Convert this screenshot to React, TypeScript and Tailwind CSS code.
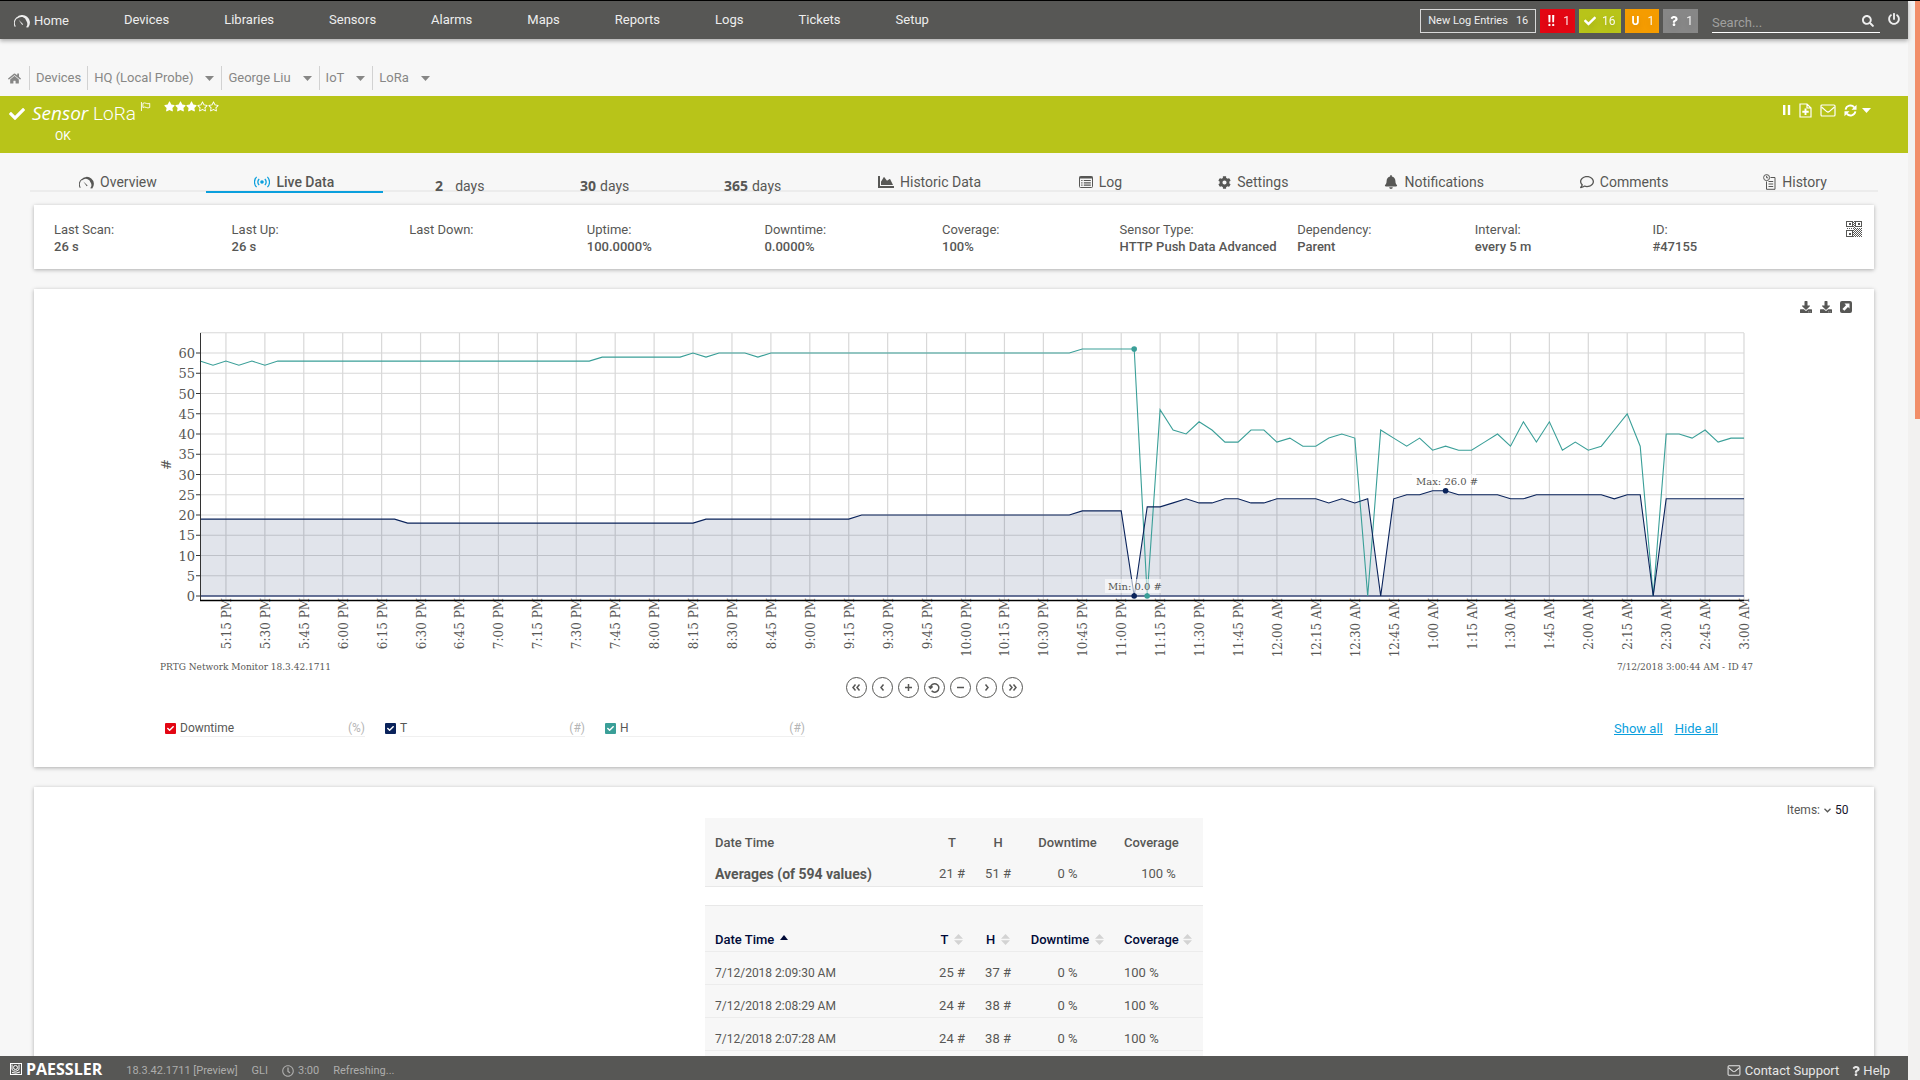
import type { ReactNode } from "react";
import {
    FaBell,
    FaChartArea,
    FaCheck,
    FaCog,
    FaDownload,
    FaHome,
    FaPowerOff,
    FaQuestion,
    FaRegClock,
    FaRegComment,
    FaRegStar,
    FaSearch,
    FaStar,
} from "react-icons/fa";

interface IconProps {
    className?: string;
}

interface LegendProps {
    id: string;
    label: string;
    unit: string;
    color: string;
}

const navItems = ["Devices", "Libraries", "Sensors", "Alarms", "Maps", "Reports", "Logs", "Tickets", "Setup"];
const crumbs = ["HQ (Local Probe)", "George Liu", "IoT", "LoRa"];

const infoItems = [
    ["Last Scan:", "26 s"],
    ["Last Up:", "26 s"],
    ["Last Down:", ""],
    ["Uptime:", "100.0000%"],
    ["Downtime:", "0.0000%"],
    ["Coverage:", "100%"],
    ["Sensor Type:", "HTTP Push Data Advanced"],
    ["Dependency:", "Parent"],
    ["Interval:", "every 5 m"],
    ["ID:", "#47155"],
];

const rows = [
    ["7/12/2018 2:09:30 AM", "25 #", "37 #", "0 %", "100 %"],
    ["7/12/2018 2:08:29 AM", "24 #", "38 #", "0 %", "100 %"],
    ["7/12/2018 2:07:28 AM", "24 #", "38 #", "0 %", "100 %"],
];

const rep = (value: number, count: number): number[] => Array(count).fill(value);

// one value every 5 minutes, 5:05 PM to 3:00 AM
const seriesT = [
    ...rep(19, 16), ...rep(18, 23), ...rep(19, 12), ...rep(20, 17), ...rep(21, 4),
    0, 22, 22, 23, 24, 23, 23, 24, 24, 23, 23, 24, 24, 24, 24, 23, 24, 23, 24,
    0, 24, 25, 25, 26, 26, 25, 25, 25, 25, 24, 24, 25, 25, 25, 25, 25, 25, 24, 25, 25,
    0, ...rep(24, 7),
];
const seriesH = [
    58, 57, 58, 57, 58, 57, ...rep(58, 25), ...rep(59, 7), 60, 59, 60, 60, 60, 59, ...rep(60, 24), ...rep(61, 5),
    0, 46, 41, 40, 43, 41, 38, 38, 41, 41, 38, 39, 37, 37, 39, 40, 39,
    0, 41, 39, 37, 39, 36, 37, 36, 36, 38, 40, 37, 43, 38, 43, 36, 38, 36, 37, 41, 45, 37,
    0, 40, 40, 39, 41, 38, 39, 39,
];

const px = (i: number) => 40 + (i * 1544) / 119;
const py = (v: number) => 271 - v * 4.05;
const toPoints = (data: number[]) => data.map((v, i) => `${px(i).toFixed(1)},${py(v).toFixed(1)}`).join(" ");

function timeLabel(step: number) {
    const minutes = 17 * 60 + 15 + step * 15;
    const hour = Math.floor(minutes / 60) % 24;
    const min = String(minutes % 60).padStart(2, "0");
    return `${hour % 12 || 12}:${min} ${hour >= 12 ? "PM" : "AM"}`;
}

function GaugeIcon({ className }: IconProps) {
    return (
        <svg viewBox="0 0 16 14" className={className} aria-hidden="true">
            <path d="M1.3 12.6A6.8 6.8 0 0 1 3 3.6" fill="none" stroke="currentColor" strokeWidth="1.1" />
            <path
                d="M2.4 3.7A7.4 7.4 0 0 1 14.2 13.4L12 13.2A5.2 5.2 0 0 0 12.4 7 5.3 5.3 0 0 0 3.4 4.6z"
                fill="currentColor"
            />
            <path d="M4.6 5.8l4.6 4.4-1 .9z" fill="currentColor" />
        </svg>
    );
}

function BroadcastIcon({ className }: IconProps) {
    return (
        <svg viewBox="0 0 16 12" className={className} fill="none" stroke="currentColor" aria-hidden="true">
            <circle cx="8" cy="6" r="1.8" fill="currentColor" stroke="none" />
            <path d="M5.2 3a4 4 0 0 0 0 6M10.8 3a4 4 0 0 1 0 6" strokeWidth="1.3" />
            <path d="M2.6.8a7.4 7.4 0 0 0 0 10.4M13.4.8a7.4 7.4 0 0 1 0 10.4" strokeWidth="1.2" />
        </svg>
    );
}

function CaretIcon() {
    return (
        <svg viewBox="0 0 9 5" className="h-[5px] w-[9px]" fill="currentColor" aria-hidden="true">
            <path d="M0 0h9L4.5 5z" />
        </svg>
    );
}

function PauseIcon() {
    return (
        <svg viewBox="0 0 9 10" className="h-[10px] w-[9px]" fill="currentColor" aria-hidden="true">
            <path d="M1 0h2.4v10H1zM5.8 0h2.4v10H5.8z" />
        </svg>
    );
}

function ListIcon({ className }: IconProps) {
    return (
        <svg viewBox="0 0 14 12" className={className} fill="none" stroke="currentColor" aria-hidden="true">
            <rect x=".5" y=".5" width="13" height="11" rx="1" />
            <path d="M.5 1.5h13" strokeWidth="2" />
            <path d="M2.2 4.5h1.3M2.2 6.8h1.3M2.2 9.1h1.3M4.8 4.5h7M4.8 6.8h7M4.8 9.1h7" strokeWidth="1.2" />
        </svg>
    );
}

function MailIcon({ className }: IconProps) {
    return (
        <svg viewBox="0 0 16 13" className={className} fill="none" stroke="currentColor" strokeWidth="1.2" aria-hidden="true">
            <rect x="1" y="1" width="14" height="11" rx="1" />
            <path d="M1.5 3l5.3 4.6q1.2.9 2.4 0L14.5 3" />
        </svg>
    );
}

function FilePlusIcon({ className }: IconProps) {
    return (
        <svg viewBox="0 0 13 15" className={className} fill="none" stroke="currentColor" aria-hidden="true">
            <path d="M1 1h7l4 4v9H1zM8 1v4h4" strokeWidth="1.2" />
            <path d="M6.5 5.5v6.4M3.3 8.7h6.4" strokeWidth="1.9" />
        </svg>
    );
}

function RefreshIcon({ className }: IconProps) {
    return (
        <svg viewBox="0 0 14 14" className={className} fill="none" stroke="currentColor" strokeWidth="2" aria-hidden="true">
            <path d="M1.7 6A5.3 5.3 0 0 1 11 3.6M12.3 8A5.3 5.3 0 0 1 3 10.4" />
            <path d="M13.5.8v5.4H8.1zM.5 13.2V7.8h5.4z" fill="currentColor" stroke="none" />
        </svg>
    );
}

function FlagIcon({ className }: IconProps) {
    return (
        <svg viewBox="0 0 11 10" className={className} fill="none" stroke="currentColor" aria-hidden="true">
            <path d="M1 0v10M2.6 1.5q2-1 3.8 0t3.8 0v4.6q-2 1-3.8 0t-3.8 0z" />
        </svg>
    );
}

function HistoryIcon({ className }: IconProps) {
    return (
        <svg viewBox="0 0 13 16" className={className} fill="none" stroke="currentColor" aria-hidden="true">
            <circle cx="3.6" cy="3.6" r="3" />
            <path d="M3.6 1.8v2H5.2M7.5 3.5H12V15.3H3.5V7.5" />
            <path d="M5.5 7.5h4.7M5.5 10h4.7M5.5 12.5h4.7" />
        </svg>
    );
}

function QrIcon({ className }: IconProps) {
    const dots: ReactNode[] = [];
    for (let y = 0; y < 16; y++) {
        for (let x = 0; x < 16; x++) {
            const mixed = (x >= 8 && y >= 8) || x === 7 || x === 8 || y === 7;
            if (mixed && (x + y) % 2 === 0) dots.push(<rect key={`${x}-${y}`} x={x} y={y} width="1" height="1" />);
        }
    }
    return (
        <svg viewBox="0 0 16 16" className={className} fill="currentColor" aria-hidden="true">
            <path fillRule="evenodd" d="M0 0h7v6H0zM1 1v4h5V1zM9 0h7v6H9zM10 1v4h5V1zM0 9h7v7H0zM1 10v5h5v-5z" />
            <path d="M3 2h2v2H3zM12 2h2v2h-2zM3 12h2v2H3z" />
            {dots}
        </svg>
    );
}

function OpenIcon({ className }: IconProps) {
    return (
        <svg viewBox="0 0 12 12" className={className} aria-hidden="true">
            <rect width="12" height="12" rx="2" fill="currentColor" />
            <path d="M4.5 2.5h5v5L8 6 4.4 9.8 2.4 8 6 4.2z" fill="white" />
        </svg>
    );
}

function SortIcon() {
    return (
        <svg viewBox="0 0 9 11" className="h-[11px] w-[9px] text-[#d3d3d3]" fill="currentColor" aria-hidden="true">
            <path d="M0 4.7L4.5 0 9 4.7zM0 6.3h9L4.5 11z" />
        </svg>
    );
}

function Badge({ color, icon, count }: { color: string; icon: ReactNode; count: number }) {
    return (
        <a href="#" className={`flex h-6 items-center gap-[6px] px-[5px] text-xs text-white/90 ${color}`}>
            <span className="flex w-3 justify-center font-bold text-white drop-shadow-md">{icon}</span>
            <span className="drop-shadow-md">{count}</span>
        </a>
    );
}

function Header() {
    return (
        <header className="z-10 flex h-[39px] shrink-0 items-center border-t border-black bg-[#575755] pr-2 pl-[14px] text-[13px] text-[#eeeeee] shadow-[0_2px_4px_rgba(0,0,0,0.3)]">
            <nav className="flex items-center gap-[55px]">
                <a href="#" className="flex items-center gap-1 pt-[2px]">
                    <GaugeIcon className="h-[14px] w-4" />
                    Home
                </a>
                {navItems.map((item) => (
                    <a key={item} href="#">{item}</a>
                ))}
            </nav>
            <div className="ml-auto flex items-center gap-1 pt-[2px]">
                <a href="#" className="flex h-6 items-center gap-2 border border-[#d8d8d8] px-[7px] text-[11px]">
                    <span>New Log Entries</span>
                    <span>16</span>
                </a>
                <Badge color="bg-[#e30613]" icon={<span className="text-sm">!!</span>} count={1} />
                <Badge color="bg-[#b8c419]" icon={<FaCheck size={12} />} count={16} />
                <Badge color="bg-[#f59c00]" icon="U" count={1} />
                <Badge color="bg-[#878787]" icon={<FaQuestion size={10} />} count={1} />
                <div className="ml-[10px] flex h-6 w-[168px] items-center border-b border-white">
                    <input
                        aria-label="Search"
                        placeholder="Search..."
                        className="w-full pt-1 text-[13px] outline-none placeholder:text-[#a0a09f]"
                    />
                    <button aria-label="Run search" className="pr-[6px]"><FaSearch size={12} /></button>
                </div>
                <button aria-label="Log out" className="ml-1 pb-1"><FaPowerOff size={12} /></button>
            </div>
        </header>
    );
}

function Breadcrumb() {
    return (
        <nav aria-label="Breadcrumb" className="flex h-[57px] items-end pb-[6px] text-[13px] text-[#878786]">
            <a href="#" aria-label="Home" className="flex h-6 items-center pr-2 pl-2"><FaHome size={13} /></a>
            <a href="#" className="flex h-6 items-center border-l border-[#d2d2d2] px-[6px]">Devices</a>
            {crumbs.map((crumb) => (
                <a key={crumb} href="#" className="flex h-6 items-center gap-3 border-l border-[#d2d2d2] pr-[7px] pl-[6px]">
                    {crumb}
                    <CaretIcon />
                </a>
            ))}
        </nav>
    );
}

function StatusBand() {
    return (
        <section className="flex h-[57px] justify-between bg-[#b8c419] text-white">
            <div className="pl-[9px]">
                <div className="flex h-8 items-center">
                    <FaCheck size={16} className="mt-1" />
                    <h1 className="mt-1 ml-[7px] text-[19px] font-light">
                        <i className="font-['Open_Sans',sans-serif] font-normal">Sensor</i> LoRa
                    </h1>
                    <FlagIcon className="mb-3 ml-1 h-[9px] w-[11px]" />
                    <div className="mb-3 ml-[13px] flex" aria-label="Priority 3 of 5">
                        <FaStar size={11} /><FaStar size={11} /><FaStar size={11} />
                        <FaRegStar size={11} /><FaRegStar size={11} />
                    </div>
                </div>
                <p className="pl-[46px] text-xs">OK</p>
            </div>
            <div className="flex h-7 items-center gap-2 pr-[37px]">
                <button aria-label="Pause"><PauseIcon /></button>
                <button aria-label="Add report"><FilePlusIcon className="h-[15px] w-[13px]" /></button>
                <button aria-label="Send mail"><MailIcon className="h-[13px] w-4" /></button>
                <button aria-label="Refresh" className="flex items-center gap-[5px]">
                    <RefreshIcon className="h-[13px] w-[13px]" />
                    <CaretIcon />
                </button>
            </div>
        </section>
    );
}

function Tab({ icon, active, children }: { icon?: ReactNode; active?: boolean; children: ReactNode }) {
    return (
        <a
            href="#"
            className={`-mb-[3px] flex h-[23px] items-center justify-center gap-[6px] border-b-2 pt-[3px] whitespace-nowrap ${active ? "border-[#0a9fdd] font-medium" : "border-transparent"}`}
        >
            {icon}
            <span>{children}</span>
        </a>
    );
}

function Tabs() {
    return (
        <nav className="mx-[30px] grid h-[39px] grid-cols-[176fr_177fr_154fr_136fr_160fr_194fr_148fr_158fr_204fr_176fr_166fr] items-end border-b-2 border-[#ececec] text-sm text-[#575755]">
            <Tab icon={<GaugeIcon className="h-[13px] w-[15px]" />}>Overview</Tab>
            <Tab active icon={<BroadcastIcon className="h-3 w-4 text-[#0a9fdd]" />}>Live Data</Tab>
            {[["2", "mr-2"], ["30", ""], ["365", ""]].map(([count, gap]) => (
                <a key={count} href="#" className="-mb-[3px] flex h-[23px] items-center justify-center gap-1 pt-2">
                    <b className={`font-['Open_Sans',sans-serif] ${gap}`}>{count}</b>
                    <span>days</span>
                </a>
            ))}
            <Tab icon={<FaChartArea size={16} />}>Historic Data</Tab>
            <Tab icon={<ListIcon className="h-3 w-[14px]" />}>Log</Tab>
            <Tab icon={<FaCog size={13} />}>Settings</Tab>
            <Tab icon={<FaBell size={14} />}>Notifications</Tab>
            <Tab icon={<FaRegComment size={14} />}>Comments</Tab>
            <Tab icon={<HistoryIcon className="h-4 w-[13px]" />}>History</Tab>
        </nav>
    );
}

function Card({ className, children }: { className: string; children: ReactNode }) {
    return (
        <section className={`relative mx-[34px] bg-white shadow-[0_1px_4px_rgba(0,0,0,0.3)] ${className}`}>
            {children}
        </section>
    );
}

function InfoCard() {
    return (
        <Card className="mt-[13px] flex h-16 items-start pt-4 pr-3 pl-5 text-[#575755]">
            <dl className="grid flex-1 grid-cols-10 text-[13px] leading-[17px]">
                {infoItems.map(([label, value]) => (
                    <div key={label} className="whitespace-nowrap">
                        <dt>{label}</dt>
                        <dd className="font-medium">{value}</dd>
                    </div>
                ))}
            </dl>
            <button aria-label="QR code" className="pl-4"><QrIcon className="h-4 w-4" /></button>
        </Card>
    );
}

function Chart() {
    const grid = Array.from({ length: 14 }, (_, i) => i * 5);
    const steps = Array.from({ length: 40 }, (_, i) => i);
    const linesT = toPoints(seriesT);
    return (
        <svg viewBox="0 0 1594 350" className="block w-full overflow-visible font-['DejaVu_Serif',serif]" fill="#575755">
            <g stroke="#d8d8d8" strokeWidth="1.2">
                {grid.map((v) => <line key={v} x1="40" x2="1584" y1={py(v)} y2={py(v)} />)}
                {steps.map((s) => <line key={s} x1={px(2 + s * 3)} x2={px(2 + s * 3)} y1="8" y2="276" />)}
            </g>
            <g fontSize="13" textAnchor="end">
                {grid.slice(0, 13).map((v) => (
                    <g key={v}>
                        <line x1="36" x2="40" y1={py(v)} y2={py(v)} stroke="#333333" />
                        <text x="35" y={py(v) + 5}>{v}</text>
                    </g>
                ))}
            </g>
            <g fontSize="12" textAnchor="end">
                {steps.map((s) => (
                    <text key={s} transform={`translate(${px(2 + s * 3) + 5} 273) rotate(-90)`}>{timeLabel(s)}</text>
                ))}
            </g>
            <text fontSize="13" transform="translate(11 145) rotate(-90)">#</text>
            <polygon points={`40,271 ${linesT} 1584,271`} fill="#0a235b" fillOpacity="0.12" />
            <line x1="40" x2="1584" y1="271" y2="271" stroke="#3c4c7c" strokeWidth="1.5" />
            <polyline points={toPoints(seriesH)} fill="none" stroke="#3a9f98" strokeWidth="1.1" />
            <polyline points={linesT} fill="none" stroke="#0a235b" strokeWidth="1.1" />
            <line x1="40.5" x2="40.5" y1="8" y2="276" stroke="#333333" />
            <line x1="40" x2="1584" y1="275.5" y2="275.5" stroke="#000000" strokeWidth="1.3" />
            <rect x="945" y="254" width="56" height="14" fill="white" fillOpacity="0.6" />
            <rect x="1252" y="149" width="64" height="13" fill="white" fillOpacity="0.6" />
            <g fontSize="10">
                <text x="948" y="265">Min: 0.0 #</text>
                <text x="1256" y="160">Max: 26.0 #</text>
            </g>
            <circle cx={px(72)} cy={py(0)} r="2.8" fill="#0a235b" />
            <circle cx={px(96)} cy={py(26)} r="2.8" fill="#0a235b" />
            <circle cx={px(72)} cy={py(61)} r="2.8" fill="#3a9f98" />
            <circle cx={px(73)} cy={py(0)} r="2.8" fill="#3a9f98" />
            <g fontSize="9">
                <text x="0" y="345">PRTG Network Monitor 18.3.42.1711</text>
                <text x="1593" y="345" textAnchor="end">7/12/2018 3:00:44 AM - ID 47</text>
            </g>
        </svg>
    );
}

const controls = [
    ["First", "M9.5 7.5L7 10.5l2.5 3M13.5 7.5l-2.5 3 2.5 3"],
    ["Back", "M11.5 7.5L9 10.5l2.5 3"],
    ["Zoom in", "M10.5 7v7M7 10.5h7"],
    ["Reset zoom", "M7.6 13.8A4.2 4.2 0 1 0 6.5 10.6M4.8 9.2l1.7 2.2L8.6 9.4"],
    ["Zoom out", "M7 10.5h7"],
    ["Forward", "M9.5 7.5l2.5 3-2.5 3"],
    ["Last", "M7.5 7.5l2.5 3-2.5 3M11.5 7.5l2.5 3-2.5 3"],
];

function LegendItem({ id, label, unit, color }: LegendProps) {
    return (
        <div className="flex w-[200px] items-center gap-1 text-xs text-[#575755]">
            <span className="relative flex h-[11px] w-[11px] text-white">
                <input
                    type="checkbox"
                    id={id}
                    defaultChecked
                    className={`h-[11px] w-[11px] appearance-none rounded-[1px] ${color}`}
                />
                <FaCheck size={7} className="pointer-events-none absolute top-[2px] left-[2px]" />
            </span>
            <label htmlFor={id} className="flex flex-1 justify-between border-b border-[#f0f0f0]">
                <span>{label}</span>
                <span className="text-[#b5b5b5]">{unit}</span>
            </label>
        </div>
    );
}

function ChartCard() {
    return (
        <Card className="mt-5 h-[478px] pt-3 text-[#575755]">
            <div className="flex h-3 justify-end gap-2 pr-[22px]">
                <button aria-label="Download image"><FaDownload size={12} /></button>
                <button aria-label="Download data"><FaDownload size={12} /></button>
                <button aria-label="Open in window"><OpenIcon className="h-3 w-3" /></button>
            </div>
            <div className="pt-3 pr-[120px] pl-[126px]">
                <Chart />
            </div>
            <div className="mt-[2px] flex justify-center gap-[5px] pr-10">
                {controls.map(([label, d]) => (
                    <button key={label} aria-label={label} className="rounded-full">
                        <svg viewBox="0 0 21 21" className="h-[21px] w-[21px]" fill="none" stroke="currentColor">
                            <circle cx="10.5" cy="10.5" r="10" />
                            <path d={d} strokeWidth="1.5" />
                        </svg>
                    </button>
                ))}
            </div>
            <div className="mt-[21px] flex items-center justify-between pr-[156px] pl-[131px]">
                <div className="flex gap-5">
                    <LegendItem id="ch-downtime" label="Downtime" unit="(%)" color="bg-[#e30613]" />
                    <LegendItem id="ch-t" label="T" unit="(#)" color="bg-[#0a235b]" />
                    <LegendItem id="ch-h" label="H" unit="(#)" color="bg-[#3a9f98]" />
                </div>
                <div className="flex gap-3 text-[13px] text-[#0a9fdd] underline">
                    <a href="#">Show all</a>
                    <a href="#">Hide all</a>
                </div>
            </div>
        </Card>
    );
}

function Columns() {
    return (
        <colgroup>
            <col className="w-[224px]" />
            <col className="w-[46px]" />
            <col className="w-[46px]" />
            <col className="w-[93px]" />
            <col className="w-[89px]" />
        </colgroup>
    );
}

function DataCard() {
    return (
        <Card className="mt-5 text-[13px] text-[#575755]">
            <div className="flex h-[31px] items-end justify-end gap-1 pr-[25px] text-xs leading-4">
                <label htmlFor="items">Items:</label>
                <span className="flex items-center">
                    <svg viewBox="0 0 7 5" className="h-[5px] w-[7px]" fill="none" stroke="currentColor" aria-hidden="true">
                        <path d="M.5.8l3 3 3-3" strokeWidth="1.3" />
                    </svg>
                    <select id="items" className="appearance-none pl-1 text-xs leading-4 text-[#14142b]">
                        <option>50</option>
                    </select>
                </span>
            </div>
            <table className="mx-auto w-[498px] table-fixed bg-[#f7f7f7]">
                <Columns />
                <thead>
                    <tr className="h-10 text-center align-bottom [&>th]:pb-[6px] [&>th]:font-medium">
                        <th className="pl-[10px] text-left">Date Time</th>
                        <th>T</th>
                        <th>H</th>
                        <th>Downtime</th>
                        <th className="pl-[10px] text-left">Coverage</th>
                    </tr>
                </thead>
                <tbody>
                    <tr className="h-7 border-b border-[#e8e8e8] text-center">
                        <th className="pt-1 pl-[10px] text-left text-sm leading-4 font-bold">Averages (of 594 values)</th>
                        <td className="pt-1">21 #</td>
                        <td className="pt-1">51 #</td>
                        <td className="pt-1">0 %</td>
                        <td className="pt-1">100 %</td>
                    </tr>
                </tbody>
            </table>
            <div className="mx-auto mt-[18px] w-[498px] border-t border-[#e8e8e8] bg-[#f7f7f7] pb-8">
                <table className="w-full table-fixed">
                    <Columns />
                    <thead>
                        <tr className="h-[46px] border-b border-[#ececec] align-bottom text-[#000a37] [&>th]:pb-[2px] [&>th]:font-medium">
                            <th className="pl-[10px]">
                                <button className="flex items-center gap-[6px]">
                                    Date Time
                                    <svg viewBox="0 0 8 5" className="mb-1 h-[5px] w-2" fill="currentColor"><path d="M0 5l4-5 4 5z" /></svg>
                                </button>
                            </th>
                            <th><button className="mx-auto flex items-center gap-[6px]">T <SortIcon /></button></th>
                            <th><button className="mx-auto flex items-center gap-[6px]">H <SortIcon /></button></th>
                            <th><button className="mx-auto flex items-center gap-[6px]">Downtime <SortIcon /></button></th>
                            <th className="pl-[10px]"><button className="flex items-center gap-1">Coverage <SortIcon /></button></th>
                        </tr>
                    </thead>
                    <tbody>
                        {rows.map(([date, t, h, down, coverage]) => (
                            <tr key={date} className="h-[33px] border-b border-[#ececec] text-center [&>td]:pt-[10px]">
                                <td className="pl-[10px] text-left text-xs">{date}</td>
                                <td>{t}</td>
                                <td>{h}</td>
                                <td>{down}</td>
                                <td className="pl-[10px] text-left">{coverage}</td>
                            </tr>
                        ))}
                    </tbody>
                </table>
            </div>
        </Card>
    );
}

function Footer() {
    return (
        <footer className="z-10 flex h-6 shrink-0 items-center bg-[#575755] px-[10px] pt-[2px] text-[11px] text-[#adadac]">
            <a href="#" className="flex items-center gap-1 font-['Open_Sans',sans-serif] text-base leading-4 font-bold text-white">
                <svg viewBox="0 0 12 12" className="h-3 w-3" fill="none" stroke="currentColor" aria-hidden="true">
                    <rect x=".5" y=".5" width="11" height="11" />
                    <circle cx="5.5" cy="4.5" r="2" />
                    <path d="M2 1.5v5q3 3.5 7 0v-5M2 9.5q4 1.5 8-.5" />
                </svg>
                PAESSLER
            </a>
            <div className="ml-6 flex items-center gap-[14px] pt-1">
                <span>18.3.42.1711 [Preview]</span>
                <span>GLI</span>
                <span className="flex items-center gap-1"><FaRegClock size={12} /> 3:00</span>
                <span>Refreshing...</span>
            </div>
            <div className="ml-auto flex items-center gap-3 pt-[3px] pr-2 text-[13px] leading-4 text-[#e6e6e6]">
                <a href="#" className="flex items-center gap-1"><MailIcon className="h-[11px] w-[14px]" /> Contact Support</a>
                <a href="#" className="flex items-center gap-[2px]"><FaQuestion size={10} /> Help</a>
            </div>
        </footer>
    );
}

export default function App() {
    return (
        <div className="flex h-screen overflow-hidden bg-[#f7f7f7] font-[Roboto,sans-serif]">
            <div className="flex min-w-0 flex-1 flex-col">
                <Header />
                <main className="min-h-0 flex-1 overflow-hidden">
                    <Breadcrumb />
                    <StatusBand />
                    <Tabs />
                    <InfoCard />
                    <ChartCard />
                    <DataCard />
                </main>
                <Footer />
            </div>
            <div className="flex w-3 shrink-0 justify-end border-t border-black bg-[#f2f1f0]">
                <div className="h-[418px] w-[5px] bg-[#f28e69]" />
            </div>
        </div>
    );
}
